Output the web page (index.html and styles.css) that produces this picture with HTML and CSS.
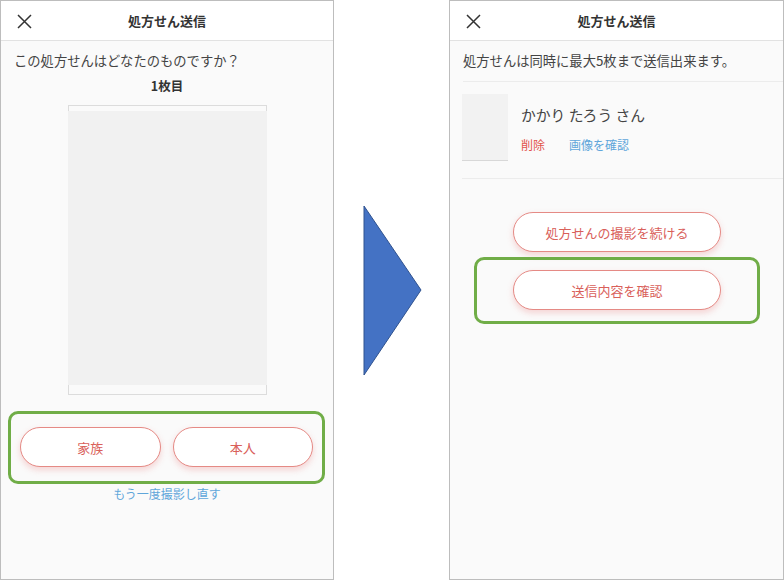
FILE: index.html
```html
<!DOCTYPE html>
<html lang="ja">
<head>
  <meta charset="UTF-8" />
  <title>処方せん送信</title>
  <link rel="stylesheet" href="styles.css">
</head>
<body>
  <div class="phone">
    <div class="header">
      <svg class="close" width="15" height="15" viewBox="0 0 15 15">
        <path d="M1 1 L14 14 M14 1 L1 14" stroke="#333" stroke-width="1.5" fill="none"/>
      </svg>
      <span class="title">処方せん送信</span>
    </div>
    <p class="note">この処方せんはどなたのものですか？</p>
    <p class="page-num">1枚目</p>
    <div class="frame">
      <div class="frame-img"></div>
    </div>
    <div class="highlight choice">
      <button class="pill">家族</button>
      <button class="pill">本人</button>
    </div>
    <a class="retake" href="#">もう一度撮影し直す</a>
  </div>

  <div class="arrow">
    <svg width="60" height="172" viewBox="0 0 60 172">
      <polygon points="1,1 58,85 1,170" fill="#4472c4" stroke="#2f528f" stroke-width="1"/>
    </svg>
  </div>

  <div class="phone">
    <div class="header">
      <svg class="close" width="15" height="15" viewBox="0 0 15 15">
        <path d="M1 1 L14 14 M14 1 L1 14" stroke="#333" stroke-width="1.5" fill="none"/>
      </svg>
      <span class="title">処方せん送信</span>
    </div>
    <p class="note">処方せんは同時に最大5枚まで送信出来ます。</p>
    <div class="list">
      <div class="item">
        <div class="thumb"></div>
        <div class="item-info">
          <div class="item-name">かかり たろう さん</div>
          <div class="item-actions">
            <a class="delete" href="#">削除</a>
            <a class="view" href="#">画像を確認</a>
          </div>
        </div>
      </div>
    </div>
    <button class="pill wide continue">処方せんの撮影を続ける</button>
    <div class="highlight confirm">
      <button class="pill wide">送信内容を確認</button>
    </div>
  </div>
</body>
</html>
```

FILE: styles.css
```css
body {
  margin: 0;
  background-color: #fff;
  font-family: 'Noto Sans CJK JP', 'Noto Sans', sans-serif;
  color: #444;
  display: flex;
}

.phone {
  box-sizing: border-box;
  width: 334px;
  height: 580px;
  border: 1px solid #bdbdbd;
  background-color: #fafafa;
  display: flex;
  flex-direction: column;
}

.phone:last-child {
  width: 335px;
}

.header {
  position: relative;
  height: 39px;
  background-color: #fff;
  border-bottom: 1px solid #e2e2e2;
  display: flex;
  align-items: center;
  justify-content: center;
}

.close {
  position: absolute;
  left: 16px;
  top: 13px;
}

.title {
  font-size: 13px;
  font-weight: bold;
  color: #333;
}

.note {
  margin: 0;
  padding: 10px 13px 0;
  font-size: 13.3px;
  line-height: 20px;
  color: #444;
}

.page-num {
  margin: 5px 0 0;
  text-align: center;
  font-size: 12.5px;
  font-weight: bold;
  line-height: 20px;
  color: #333;
}

.frame {
  box-sizing: border-box;
  width: 199px;
  height: 290px;
  margin: 9px 0 0 67px;
  padding-top: 5px;
  border: 1px solid #dcdcdc;
  background-color: #fafafa;
}

.frame-img {
  height: 274px;
  margin: 0 -1px;
  background-color: #f1f1f1;
}

.highlight {
  box-sizing: border-box;
  border: 3px solid #70ad47;
  border-radius: 10px;
}

.choice {
  margin: 16px 8px 0 7px;
  padding: 13px 9px 14px;
  display: flex;
  gap: 12px;
}

.pill {
  box-sizing: border-box;
  height: 40px;
  border: 1px solid #e58a85;
  border-radius: 20px;
  background-color: #fff;
  color: #d9605a;
  font-family: inherit;
  font-size: 13px;
  box-shadow: 0 3px 6px rgba(235, 110, 110, 0.28);
  cursor: pointer;
}

.choice .pill {
  flex: 1;
}

.retake {
  margin-top: 1px;
  text-align: center;
  font-size: 12px;
  line-height: 18px;
  color: #5fa6da;
  text-decoration: none;
}

.arrow {
  width: 115px;
  padding: 205px 0 0 29px;
  box-sizing: border-box;
}

.list {
  margin: 10px 0 0 13px;
  border-top: 1px solid #ececec;
}

.item {
  display: flex;
  gap: 13px;
  padding: 12px 0 17px;
  margin-left: -1px;
  border-bottom: 1px solid #ececec;
}

.thumb {
  width: 46px;
  height: 67px;
  background-color: #f2f2f2;
  border-bottom: 1px solid #d8d8d8;
  box-sizing: border-box;
}

.item-name {
  margin-top: 10px;
  font-size: 14.8px;
  line-height: 22px;
  color: #444;
}

.item-actions {
  margin-top: 10px;
  display: flex;
  gap: 24px;
  font-size: 12px;
  line-height: 18px;
}

.item-actions a {
  text-decoration: none;
}

.delete {
  color: #e2524a;
}

.view {
  color: #5fa6da;
}

.wide {
  width: 208px;
}

.continue {
  margin: 33px 0 0 63px;
}

.confirm {
  width: 286px;
  margin: 5px 0 0 24px;
  padding: 10px 0 11px;
  display: flex;
  justify-content: center;
}
```
